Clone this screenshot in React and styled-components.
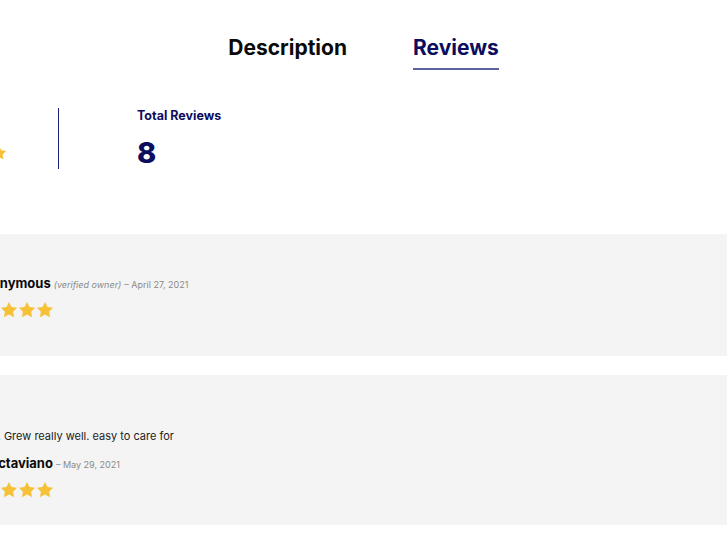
import React from 'react'
import styled, { createGlobalStyle } from 'styled-components'

const GlobalStyle = createGlobalStyle`
    html, body {
        margin: 0;
        padding: 0;
        background: #ffffff;
        overflow: hidden;
    }
    body {
        font-family: Inter, "Noto Sans", "Liberation Sans", sans-serif;
        color: #111111;
    }
`

const reviews = [
    {
        name: 'Anonymous',
        verified: true,
        date: 'April 27, 2021',
        rating: 5,
    },
    {
        text: 'Nice. Grew really well. easy to care for',
        name: 'J. Octaviano',
        verified: false,
        date: 'May 29, 2021',
        rating: 5,
    },
]

const Star = ({ size }) => (
    <svg width={size} height={size} viewBox="0 0 24 24">
        <path
            fill="#f6c136"
            d="M12 1.2l3.3 6.8 7.5 1-5.4 5.2 1.4 7.5L12 18.1l-6.8 3.6 1.4-7.5-5.4-5.2 7.5-1z"
        />
    </svg>
)

const Stars = ({ count, size, className }) => (
    <StarRow className={className}>
        {Array.from({ length: count }).map((_, i) => (
            <Star key={i} size={size} />
        ))}
    </StarRow>
)

const App = () => {
    return (
        <Page>
            <GlobalStyle />
            <Container>
                <Tabs>
                    <Tab>Description</Tab>
                    <Tab $active>Reviews</Tab>
                </Tabs>

                <Stats>
                    <RatingBlock>
                        <StatLabel>Average Rating</StatLabel>
                        <RatingLine>
                            <StatValue>5.0</StatValue>
                            <Stars count={5} size={16} />
                        </RatingLine>
                    </RatingBlock>
                    <Divider />
                    <TotalBlock>
                        <StatLabel>Total Reviews</StatLabel>
                        <StatValue>8</StatValue>
                    </TotalBlock>
                </Stats>

                <ReviewList>
                    {reviews.map((r, i) => (
                        <Card key={i}>
                            <Avatar />
                            <CardBody>
                                {r.text && <ReviewText>{r.text}</ReviewText>}
                                <Meta>
                                    <Author>{r.name}</Author>
                                    {r.verified && <Verified>(verified owner)</Verified>}
                                    <DateText>– {r.date}</DateText>
                                </Meta>
                                <CardStars count={r.rating} size={18} />
                            </CardBody>
                        </Card>
                    ))}
                </ReviewList>
            </Container>
        </Page>
    )
}

export default App

const Page = styled.div`
    display: flex;
    justify-content: center;
    width: 100%;
    min-height: 545px;
`

const Container = styled.div`
    flex-shrink: 0;
    width: 1101px;
    display: flex;
    flex-direction: column;
`

const Tabs = styled.nav`
    display: flex;
    justify-content: center;
    gap: 66px;
    padding-top: 36px;
`

const Tab = styled.div`
    font-size: 21px;
    line-height: 24px;
    font-weight: 700;
    padding-bottom: 8px;
    color: ${p => (p.$active ? '#0c0d5e' : '#0a0a0a')};
    border-bottom: 2px solid ${p => (p.$active ? '#5d62a0' : 'transparent')};
`

const Stats = styled.section`
    display: grid;
    grid-template-columns: 245px 1px 1fr;
    margin-top: 38px;
`

const RatingBlock = styled.div`
    justify-self: end;
    margin-right: 51px;
    display: flex;
    flex-direction: column;
    gap: 12px;
`

const RatingLine = styled.div`
    display: flex;
    align-items: center;
    gap: 10px;
`

const Divider = styled.div`
    width: 1px;
    height: 61px;
    background: #1c1f7a;
`

const TotalBlock = styled.div`
    display: flex;
    flex-direction: column;
    gap: 11px;
    padding-left: 78px;
`

const StatLabel = styled.div`
    font-size: 12.5px;
    line-height: 16px;
    font-weight: 700;
    color: #0c0d5e;
`

const StatValue = styled.div`
    font-size: 29px;
    line-height: 35px;
    font-weight: 800;
    color: #0c0d5e;
`

const StarRow = styled.div`
    display: flex;
    height: 18px;
`

const CardStars = styled(Stars)`
    margin-left: -10px;
`

const ReviewList = styled.div`
    display: flex;
    flex-direction: column;
    gap: 19px;
    margin-top: 63px;
`

const Card = styled.article`
    display: flex;
    align-items: flex-start;
    gap: 16px;
    padding: 26px 75px;
    background: #f4f4f4;
`

const Avatar = styled.div`
    width: 70px;
    height: 70px;
    border-radius: 50%;
    background: #dddddd;
    flex-shrink: 0;
`

const CardBody = styled.div`
    display: flex;
    flex-direction: column;
    align-items: flex-start;
    padding-top: 13px;
`

const ReviewText = styled.p`
    margin: 14px 0 9px;
    font-size: 11px;
    line-height: 16px;
    color: #222222;
`

const Meta = styled.div`
    display: flex;
    align-items: baseline;
    gap: 3px;
    height: 21px;
    line-height: 21px;
    margin-bottom: 7px;
`

const Author = styled.span`
    font-size: 13px;
    font-weight: 700;
    color: #0a0a0a;
`

const Verified = styled.span`
    font-size: 9px;
    font-style: italic;
    color: #8a8a8a;
`

const DateText = styled.span`
    font-size: 9px;
    color: #8a8a8a;
`
